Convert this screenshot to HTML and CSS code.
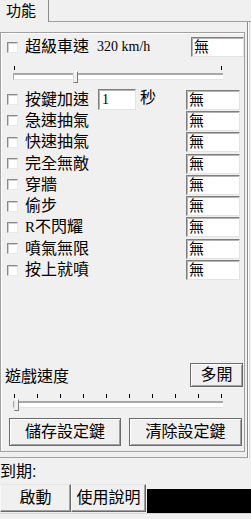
FILE: index.html
```html
<!DOCTYPE html>
<html>
<head>
  <meta charset="utf-8">
  <meta name="viewport" content="width=device-width">
  <title>功能</title>
<link rel="stylesheet" href="styles.css">
</head>
<body>
  <div class="tabs">
    <div class="tab">功能</div>
    <div class="tab-rest"></div>
  </div>
  <div class="page">
    <div class="frame">
      <div class="opt first">
        <span class="cb"></span><span class="lbl">超級車速</span><span class="kmh">320 km/h</span>
        <span class="box wide">無</span>
      </div>

      <div class="slider top">
        <div class="ticks"><i></i><i></i></div>
        <div class="track"><span class="thumb" style="left: 59px"></span></div>
      </div>

      <div class="opts">
        <div class="opt">
          <span class="cb"></span><span class="lbl">按鍵加速</span>
          <span class="box sec">1</span><span class="unit">秒</span>
          <span class="box">無</span>
        </div>
        <div class="opt"><span class="cb"></span><span class="lbl">急速抽氣</span><span class="box">無</span></div>
        <div class="opt"><span class="cb"></span><span class="lbl">快速抽氣</span><span class="box">無</span></div>
        <div class="opt"><span class="cb"></span><span class="lbl">完全無敵</span><span class="box">無</span></div>
        <div class="opt"><span class="cb"></span><span class="lbl">穿牆</span><span class="box">無</span></div>
        <div class="opt"><span class="cb"></span><span class="lbl">偷步</span><span class="box">無</span></div>
        <div class="opt"><span class="cb"></span><span class="lbl"><span class="r">R</span>不閃耀</span><span class="box">無</span></div>
        <div class="opt"><span class="cb"></span><span class="lbl">噴氣無限</span><span class="box">無</span></div>
        <div class="opt"><span class="cb"></span><span class="lbl">按上就噴</span><span class="box">無</span></div>
      </div>

      <div class="speed">
        <span class="speed-lbl">遊戲速度</span>
        <button class="btn multi">多開</button>
      </div>

      <div class="slider bottom">
        <div class="ticks"><i></i><i></i><i></i><i></i><i></i><i></i><i></i><i></i><i></i><i></i></div>
        <div class="track"><span class="thumb" style="left: 0px"></span></div>
      </div>

      <div class="actions">
        <button class="btn save">儲存設定鍵</button>
        <button class="btn clear">清除設定鍵</button>
      </div>
    </div>
  </div>

  <div class="expire">到期:</div>
  <div class="bar">
    <button class="btn start">啟動</button>
    <button class="btn help">使用說明</button>
    <div class="status"></div>
  </div>
</body>
</html>
```

FILE: styles.css
```css
body {
  margin: 0;
  width: 251px;
  height: 519px;
  background: #f0f0f0;
  font-family: "Liberation Sans", "Noto Sans CJK TC", sans-serif;
  font-size: 16px;
  color: #000;
  overflow: hidden;
}

/* tab header */
.tabs {
  display: flex;
  height: 22px;
}

.tab {
  width: 42px;
  padding-left: 6px;
  line-height: 21px;
  font-size: 15px;
  border-right: 1px solid #8c8c8c;
}

.tab-rest {
  flex: 1;
  border-bottom: 1px solid #a0a0a0;
}

/* tab page */
.page {
  width: 247px;
  height: 425px;
  padding-top: 10px;
  border-right: 1px solid #8c8c8c;
  border-bottom: 1px solid #a0a0a0;
  box-shadow: 1px 0 0 #fff, 2px 0 0 #d8d8d8;
}

.frame {
  width: 243px;
  height: 418px;
  border: 1px solid #a0a0a0;
  box-shadow: inset 1px 1px 0 #fff;
}

/* option rows */
.opt {
  display: flex;
  align-items: center;
  height: 21.3px;
  padding-left: 6px;
  padding-right: 4px;
  white-space: nowrap;
}

.opt.first {
  height: 20px;
  margin-top: 4px;
  padding-right: 0;
}

.cb {
  width: 9px;
  height: 9px;
  background: #fff;
  border: 1px solid;
  border-color: #8a8a8a #e8e8e8 #e8e8e8 #8a8a8a;
  box-shadow: inset 1px 1px 0 #cfcfcf;
  flex: none;
}

.lbl {
  margin-left: 7px;
  line-height: 18px;
}

.r {
  font-family: "Liberation Serif", serif;
  font-size: 15px;
}

.kmh {
  margin-left: 8px;
  font-family: "Liberation Serif", serif;
  font-size: 14px;
}

.box {
  margin-left: auto;
  width: 50px;
  height: 18px;
  padding-left: 2px;
  background: #fff;
  border: 1px solid;
  border-color: #7e7e7e #e3e3e3 #e3e3e3 #7e7e7e;
  box-shadow: inset 1px 1px 0 #b4b4b4;
  font-family: "Liberation Serif", "Noto Sans CJK TC", serif;
  font-size: 15px;
  line-height: 18px;
  flex: none;
  overflow: hidden;
}

.box.wide {
  width: 49px;
}

.box.sec {
  margin-left: 9px;
  width: 33px;
  height: 19px;
  font-size: 14px;
  line-height: 19px;
  padding-left: 3px;
}

.unit {
  margin-left: 4px;
  line-height: 18px;
  align-self: flex-start;
}

/* sliders */
.slider {
  margin-left: 12px;
  width: 210px;
}

.slider.top {
  margin-top: 9px;
  height: 23px;
}

.slider.bottom {
  margin-top: 8px;
  height: 17px;
}

.ticks {
  display: flex;
  justify-content: space-between;
  padding: 0 1px;
  height: 4px;
}

.ticks i {
  width: 1px;
  height: 4px;
  background: #000;
}

.slider.top .ticks {
  margin-top: 1px;
}

.track {
  position: relative;
  height: 4px;
  background: #fff;
  border-top: 2px solid #a8a8a8;
  border-left: 1px solid #a8a8a8;
  border-bottom: 1px solid #e3e3e3;
  margin-top: 3px;
}

.thumb {
  position: absolute;
  top: -4px;
  width: 3px;
  height: 10px;
  background: #f0f0f0;
  border: 1px solid;
  border-color: #fff #7a7a7a #7a7a7a #e0e0e0;
}

/* speed row */
.speed {
  display: flex;
  justify-content: space-between;
  align-items: flex-start;
  margin-top: 82px;
  padding-left: 4px;
  padding-right: 1px;
  height: 23px;
}

.speed-lbl {
  margin-top: 5px;
  line-height: 18px;
}

/* buttons */
.btn {
  font-family: "Liberation Sans", "Noto Sans CJK TC", sans-serif;
  font-size: 16px;
  color: #000;
  background: #f0f0f0;
  border: 1px solid;
  border-color: #f8f8f8 #6a6a6a #6a6a6a #f8f8f8;
  box-shadow: inset -1px -1px 0 #a0a0a0;
  padding: 0;
  margin: 0;
  line-height: 20px;
}

.multi {
  width: 53px;
  height: 24px;
  border-color: #6a6a6a;
  box-shadow: inset 1px 1px 0 #fff, inset -1px -1px 0 #a0a0a0;
}

.actions {
  display: flex;
  gap: 8px;
  margin-top: 7px;
  padding-left: 8px;
}

.save, .clear {
  height: 28px;
  border-color: #6a6a6a;
  box-shadow: inset 1px 1px 0 #fff, inset -1px -1px 0 #a0a0a0;
}

.save {
  width: 112px;
}

.clear {
  width: 113px;
}

/* footer */
.expire {
  margin-top: 3px;
  line-height: 22px;
  height: 23px;
}

.bar {
  display: flex;
  align-items: flex-start;
  height: 29px;
  border-bottom: 1px solid #d8d8d8;
}

.start {
  width: 71px;
  height: 28px;
  border-top-color: #e6e6e6;
}

.help {
  width: 75px;
  height: 28px;
  border-top-color: #e6e6e6;
}

.status {
  flex: 1;
  height: 24px;
  margin-top: 5px;
  margin-left: 1px;
  background: #000;
}
```
